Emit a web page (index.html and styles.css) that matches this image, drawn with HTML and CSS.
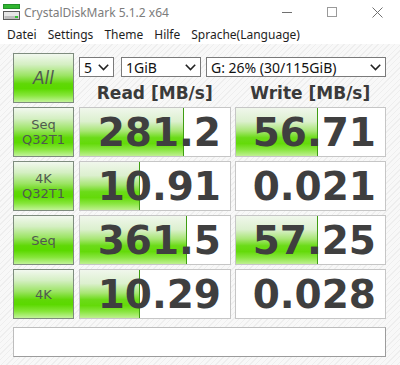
FILE: index.html
```html
<!DOCTYPE html>
<html lang="de">
<head>
    <meta charset="UTF-8">
    <meta name="viewport" content="width=device-width, initial-scale=1.0">
    <title>CrystalDiskMark 5.1.2 x64</title>
    <link rel="stylesheet" href="styles.css">
</head>
<body>
    <div class="window">
        <div class="titlebar">
            <svg class="app-icon" width="18" height="17" viewBox="0 0 18 17">
                <rect x="0.5" y="0.5" width="16" height="4" fill="#2fb52f" stroke="#23902a"/>
                <rect x="0.5" y="7.5" width="16" height="8" fill="#e6e6e6" stroke="#5a5a5a"/>
                <rect x="1.5" y="12" width="14" height="3" fill="#bdbdbd"/>
                <rect x="12" y="12" width="3" height="2" fill="#33c233"/>
            </svg>
            <span class="title">CrystalDiskMark 5.1.2 x64</span>
            <div class="controls">
                <svg width="10" height="10" viewBox="0 0 10 10"><line x1="0" y1="5.5" x2="10" y2="5.5" stroke="#707070"/></svg>
                <svg width="10" height="10" viewBox="0 0 10 10"><rect x="0.5" y="0.5" width="9" height="9" fill="none" stroke="#9a9a9a"/></svg>
                <svg width="11" height="11" viewBox="0 0 11 11"><path d="M0.5 0.5 L10.5 10.5 M10.5 0.5 L0.5 10.5" stroke="#707070" fill="none"/></svg>
            </div>
        </div>

        <div class="menubar">
            <span>Datei</span>
            <span>Settings</span>
            <span>Theme</span>
            <span>Hilfe</span>
            <span>Sprache(Language)</span>
        </div>

        <div class="main">
            <div class="row top-row">
                <div class="label all">All</div>
                <div class="top-right">
                    <div class="selects">
                        <div class="select sel-count">5<svg class="chev" width="11" height="7" viewBox="0 0 11 7"><path d="M0.8 0.8 L5.5 5.5 L10.2 0.8" fill="none" stroke="#222" stroke-width="1.6"/></svg></div>
                        <div class="select sel-size">1GiB<svg class="chev" width="11" height="7" viewBox="0 0 11 7"><path d="M0.8 0.8 L5.5 5.5 L10.2 0.8" fill="none" stroke="#222" stroke-width="1.6"/></svg></div>
                        <div class="select sel-drive">G: 26% (30/115GiB)<svg class="chev" width="11" height="7" viewBox="0 0 11 7"><path d="M0.8 0.8 L5.5 5.5 L10.2 0.8" fill="none" stroke="#222" stroke-width="1.6"/></svg></div>
                    </div>
                    <div class="heads">
                        <div class="head">Read [MB/s]</div>
                        <div class="head">Write [MB/s]</div>
                    </div>
                </div>
            </div>

            <div class="row">
                <div class="label">Seq<br>Q32T1</div>
                <div class="cell"><div class="fill" style="width: 103px"></div><span class="num">281.2</span></div>
                <div class="cell"><div class="fill" style="width: 81px"></div><span class="num">56.71</span></div>
            </div>
            <div class="row">
                <div class="label">4K<br>Q32T1</div>
                <div class="cell"><div class="fill" style="width: 59px"></div><span class="num">10.91</span></div>
                <div class="cell"><span class="num">0.021</span></div>
            </div>
            <div class="row">
                <div class="label single">Seq</div>
                <div class="cell"><div class="fill" style="width: 106px"></div><span class="num">361.5</span></div>
                <div class="cell"><div class="fill" style="width: 81px"></div><span class="num">57.25</span></div>
            </div>
            <div class="row">
                <div class="label single">4K</div>
                <div class="cell"><div class="fill" style="width: 59px"></div><span class="num">10.29</span></div>
                <div class="cell"><span class="num">0.028</span></div>
            </div>

            <div class="comment"></div>
        </div>
    </div>
</body>
</html>
```

FILE: styles.css
```css
body { margin: 0; font-family: "Noto Sans", "DejaVu Sans", sans-serif; }
.window { width: 400px; height: 365px; background: #fff; overflow: hidden; }

.titlebar { height: 24px; display: flex; align-items: center; }
.app-icon { margin: 0 3px 0 3px; }
.title { font-size: 12px; color: #7c7c7c; }
.controls { margin-left: auto; display: flex; align-items: center; gap: 35px; padding-right: 17px; }

.menubar { height: 20px; display: flex; align-items: center; padding-left: 7px; font-size: 12px; color: #1e1e1e; }
.menubar span { margin-right: 11px; }

.main {
    height: 321px;
    padding: 9px 14px 0 13px;
    box-sizing: border-box;
    background: repeating-linear-gradient(135deg, #f8f8f8 0 3px, #eeeeee 3px 4px);
    display: flex;
    flex-direction: column;
    gap: 4px;
}

.row { display: flex; height: 50px; }
.label {
    width: 61px;
    height: 50px;
    box-sizing: border-box;
    border: 1px solid #7e8c7e;
    background: linear-gradient(to bottom, #f2f8ef 0%, #d4efc2 22%, #9be463 45%, #5fd806 62%, #5bd900 72%, #86e63a 86%, #c2f39a 100%);
    display: flex;
    align-items: center;
    justify-content: center;
    text-align: center;
    font-family: "DejaVu Sans", sans-serif;
    font-size: 13px;
    line-height: 15px;
    color: #505a50;
    margin-right: 5px;
}
.label.all { font-style: italic; font-size: 17px; }

.top-right { flex: 1; display: flex; flex-direction: column; }
.selects { display: flex; margin-top: 4px; height: 20px; }
.select {
    height: 20px;
    box-sizing: border-box;
    border: 1px solid #7a7a7a;
    background: #fff;
    display: flex;
    align-items: center;
    justify-content: space-between;
    padding: 0 4px 0 4px;
    font-size: 14px;
    color: #111;
}
.sel-count { width: 35px; margin-right: 7px; }
.sel-size { width: 80px; margin-right: 5px; }
.sel-drive { width: 180px; }

.heads { display: flex; gap: 4px; padding-top: 6px; }
.head {
    flex: 1;
    text-align: center;
    font-family: "DejaVu Sans", sans-serif;
    font-weight: bold;
    font-size: 17px;
    color: #3a3a3a;
}

.cell {
    position: relative;
    width: 152px;
    height: 50px;
    box-sizing: border-box;
    border: 1px solid #c6c6c6;
    background: #fff;
    display: flex;
    align-items: center;
    justify-content: flex-end;
    padding-right: 9px;
}
.cell + .cell { margin-left: 4px; width: 151px; }
.fill {
    position: absolute;
    left: 0;
    top: 0;
    bottom: 0;
    border-right: 1px solid #3f9d12;
    background: linear-gradient(to bottom, #f0f7ec 0%, #dcf0cf 28%, #a8e674 48%, #6bdb18 62%, #64da0a 74%, #8ae642 87%, #bff091 100%);
}
.num {
    position: relative;
    font-family: "DejaVu Sans", sans-serif;
    font-weight: bold;
    font-size: 39px;
    color: #3f3f3f;
}

.comment {
    margin-top: 4px;
    height: 30px;
    box-sizing: border-box;
    border: 1px solid #bdbdbd;
    border-right-color: #9c9c9c;
    border-bottom-color: #9c9c9c;
    background: #fff;
}
```
